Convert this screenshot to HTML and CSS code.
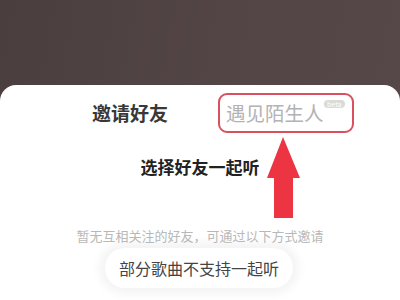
FILE: index.html
```html
<html lang="zh">
<head>
    <title>一起听</title>
    <link rel="stylesheet" href="styles.css">
</head>
<body>

<div class="sheet">
    <div class="tabs">
        <div class="tab active">邀请好友</div>
        <div class="tab stranger">
            遇见陌生人<span class="beta">beta</span>
        </div>
    </div>

    <h3 class="title">选择好友一起听</h3>

    <p class="hint">暂无互相关注的好友，可通过以下方式邀请</p>

    <div class="pill">部分歌曲不支持一起听</div>

    <svg class="arrow" width="36" height="84" viewBox="0 0 36 84">
        <polygon points="17,0 34,41 27,41 27,81 8,81 8,41 1,41" fill="#ec3442"/>
    </svg>
</div>

</body>
</html>
```

FILE: styles.css
```css
html {
    font-family: "Noto Sans CJK SC", "Noto Sans", sans-serif;
}

body {
    margin: 0;
    width: 400px;
    height: 300px;
    overflow: hidden;
    background: linear-gradient(100deg, #4a3e3f 0%, #534545 50%, #564848 100%);
}

.sheet {
    position: relative;
    margin-top: 85px;
    height: 215px;
    background-color: #fff;
    border-radius: 16px 16px 0 0;
}

.tabs {
    display: flex;
    align-items: center;
    padding: 8px 0 0 92px;
}

.tab {
    font-size: 19px;
    line-height: 24px;
}

.tab.active {
    font-weight: bold;
    color: #383838;
    margin-right: 50px;
}

.tab.stranger {
    position: relative;
    box-sizing: border-box;
    width: 136px;
    height: 40px;
    padding: 6px 0 0 6px;
    color: #b3b3b3;
    font-size: 19.5px;
    border: 2px solid #d9505f;
    border-radius: 9px;
}

.beta {
    position: absolute;
    top: 5px;
    left: 104px;
    padding: 0 3px;
    font-size: 7px;
    line-height: 8px;
    color: #fff;
    background-color: #dadada;
    border-radius: 4px;
}

.title {
    margin: 23px 0 0 0;
    text-align: center;
    font-size: 17px;
    line-height: 22px;
    color: #222;
}

.hint {
    margin: 49px 0 0 0;
    text-align: center;
    font-size: 13px;
    line-height: 18px;
    color: #b8b8b8;
}

.pill {
    width: 188px;
    height: 40px;
    margin: 3px 0 0 105px;
    border-radius: 20px;
    background-color: #fff;
    box-shadow: 0 0 10px 6px #f4f4f4;
    text-align: center;
    font-size: 16px;
    line-height: 40px;
    color: #444;
}

.arrow {
    position: absolute;
    left: 266px;
    top: 52px;
}
```
